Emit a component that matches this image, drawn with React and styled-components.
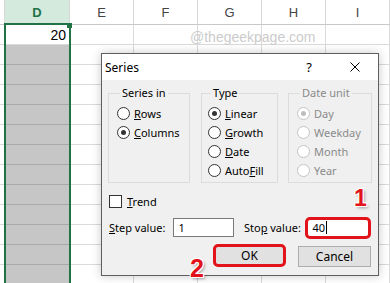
import styled, { createGlobalStyle } from "styled-components";

// Global :

const GlobalStyle = createGlobalStyle`
  html, body {
    margin: 0;
    padding: 0;
  }
  body {
    background: #fff;
    font-family: "Noto Sans", "Liberation Sans", sans-serif;
  }
`;

// Sheet :

const Page = styled.div`
  position: relative;
  width: 390px;
  height: 283px;
  overflow: hidden;
  background: #fff;
`;

const Sheet = styled.div`
  display: flex;
  flex-direction: column;
`;

const SheetRow = styled.div`
  display: flex;
`;

const HeaderCell = styled.div`
  box-sizing: border-box;
  flex: none;
  width: ${(p) => p.$w}px;
  height: 25px;
  display: flex;
  align-items: center;
  justify-content: center;
  border-right: 1px solid #d6d6d6;
  border-bottom: 1px solid #c9c9c9;
  background: ${(p) => (p.$selected ? "#d3eadd" : "#fff")};
  color: ${(p) => (p.$selected ? "#217346" : "#444")};
  font-family: "Liberation Sans", sans-serif;
  font-size: 13px;
  font-weight: ${(p) => (p.$selected ? 700 : 400)};
`;

const Cell = styled.div`
  box-sizing: border-box;
  flex: none;
  width: ${(p) => p.$w}px;
  height: 20px;
  display: flex;
  align-items: center;
  justify-content: flex-end;
  padding-right: 3px;
  border-right: 1px solid ${(p) => (p.$shaded ? "#c6c6c6" : "#dadada")};
  border-bottom: 1px solid ${(p) => (p.$shaded ? "#a9a9a9" : "#dadada")};
  background: ${(p) => (p.$shaded ? "#c6c6c6" : "#fff")};
  font-family: "Liberation Sans", sans-serif;
  font-size: 14px;
  color: #000;
`;

const Selection = styled.div`
  position: absolute;
  left: 4px;
  top: 23px;
  width: 67px;
  height: 300px;
  box-sizing: border-box;
  border: 2px solid #217346;
  pointer-events: none;
`;

const FillHandle = styled.div`
  position: absolute;
  left: 67px;
  top: 23px;
  width: 5px;
  height: 5px;
  background: #217346;
`;

const Watermark = styled.div`
  position: absolute;
  left: 190px;
  top: 29px;
  font-family: "Liberation Sans", sans-serif;
  font-size: 14px;
  color: #cbcbcb;
`;

// Dialog :

const Dialog = styled.div`
  position: absolute;
  left: 101px;
  top: 53px;
  width: 278px;
  height: 223px;
  box-sizing: border-box;
  display: flex;
  flex-direction: column;
  border: 1px solid #5f5f5f;
  background: #f0f0f0;
  box-shadow: 0 0 9px rgba(0, 0, 0, 0.22);
  font-size: 11px;
  color: #000;
`;

const TitleBar = styled.div`
  display: flex;
  align-items: center;
  height: 26px;
  padding-left: 3px;
  background: #fff;
  font-size: 12px;
`;

const Title = styled.span`
  flex: 1;
`;

const TitleButton = styled.span`
  display: flex;
  align-items: center;
  justify-content: center;
  width: 46px;
  height: 26px;
  font-size: 13px;
`;

const Body = styled.div`
  display: flex;
  flex-direction: column;
  flex: 1;
  padding: 6px 7px 0 6px;
`;

const Groups = styled.div`
  display: flex;
  gap: ${(p) => p.$gap || 10}px;
`;

const Group = styled.fieldset`
  box-sizing: border-box;
  flex: none;
  width: ${(p) => p.$w}px;
  height: 97px;
  margin: 0;
  margin-right: ${(p) => p.$mr || 0}px;
  padding: 4px 0 0 ${(p) => p.$pl || 8}px;
  min-width: 0;
  border: 1px solid #dcdcdc;
`;

const Legend = styled.legend`
  margin-left: 3px;
  padding: 0 2px;
  line-height: 14px;
  color: ${(p) => (p.$disabled ? "#8a8a8a" : "#000")};
`;

const Option = styled.div`
  display: flex;
  align-items: center;
  gap: 4px;
  height: 19px;
  color: ${(p) => (p.$disabled ? "#8a8a8a" : "#000")};
`;

const Radio = styled.span`
  box-sizing: border-box;
  flex: none;
  width: 13px;
  height: 13px;
  border-radius: 50%;
  border: 1px solid ${(p) => (p.$disabled ? "#c4c4c4" : "#333")};
  background: #fff;
  display: flex;
  align-items: center;
  justify-content: center;

  &::after {
    content: "";
    display: ${(p) => (p.$checked ? "block" : "none")};
    width: 5px;
    height: 5px;
    border-radius: 50%;
    background: ${(p) => (p.$disabled ? "#bdbdbd" : "#333")};
  }
`;

const Key = styled.span`
  text-decoration: underline;
  text-underline-offset: 1px;
`;

const CheckRow = styled.div`
  display: flex;
  align-items: center;
  gap: 5px;
  height: 13px;
  margin-top: 12px;
  padding-left: 1px;
`;

const Checkbox = styled.span`
  box-sizing: border-box;
  width: 13px;
  height: 13px;
  border: 1px solid #333;
  background: #fff;
`;

const FieldRow = styled.div`
  display: flex;
  align-items: center;
  height: 19px;
  margin-top: 10px;
  padding-left: 1px;
`;

const FieldLabel = styled.span`
  width: ${(p) => p.$w}px;
  margin-left: ${(p) => p.$ml || 0}px;
`;

const Input = styled.div`
  box-sizing: border-box;
  display: flex;
  align-items: center;
  width: ${(p) => p.$w}px;
  height: ${(p) => (p.$marked ? 22 : 19)}px;
  padding-left: ${(p) => (p.$marked ? 4 : 4)}px;
  background: #fff;
  border: ${(p) => (p.$marked ? "3px solid #e3131b" : "1px solid #7a7a7a")};
  border-radius: ${(p) => (p.$marked ? 5 : 0)}px;
  font-size: 11px;
`;

const Caret = styled.span`
  display: inline-block;
  width: 1px;
  height: 13px;
  margin-left: 1px;
  background: #000;
`;

const Buttons = styled.div`
  display: flex;
  align-items: flex-end;
  justify-content: flex-end;
  gap: 12px;
  height: 23px;
  margin-top: 7px;
`;

const Button = styled.div`
  box-sizing: border-box;
  display: flex;
  align-items: center;
  justify-content: center;
  width: ${(p) => (p.$marked ? 73 : 73)}px;
  height: ${(p) => (p.$marked ? 23 : 21)}px;
  background: #e1e1e1;
  border: ${(p) => (p.$marked ? "3px solid #e3131b" : "1px solid #adadad")};
  border-radius: ${(p) => (p.$marked ? 5 : 0)}px;
  font-size: 12px;
`;

const Step = styled.span`
  position: absolute;
  left: ${(p) => p.$x}px;
  top: ${(p) => p.$y}px;
  font-family: "Liberation Sans", sans-serif;
  font-weight: 700;
  font-size: ${(p) => p.$size}px;
  line-height: 1;
  color: #e3131b;
  text-shadow: 1px 1px 0 #fff, -1px -1px 0 #fff, 1px -1px 0 #fff,
    -1px 1px 0 #fff, 2px 2px 3px rgba(0, 0, 0, 0.35);
`;

// Data :

const columns = [
  { key: "C", w: 5 },
  { key: "D", w: 65 },
  { key: "E", w: 64 },
  { key: "F", w: 64 },
  { key: "G", w: 64 },
  { key: "H", w: 64 },
  { key: "I", w: 64 },
];

const rows = Array.from({ length: 13 }, (_, i) => i);

// Component :

function CloseIcon() {
  return (
    <svg width="10" height="10" viewBox="0 0 10 10">
      <path d="M0.5 0.5 L9.5 9.5 M9.5 0.5 L0.5 9.5" stroke="#000" strokeWidth="1" />
    </svg>
  );
}

function App() {
  return (
    <>
      <GlobalStyle />
      <Page>
        <Sheet>
          <SheetRow>
            {columns.map((c) => (
              <HeaderCell key={c.key} $w={c.w} $selected={c.key === "D"}>
                {c.key === "C" ? "" : c.key}
              </HeaderCell>
            ))}
          </SheetRow>
          {rows.map((r) => (
            <SheetRow key={r}>
              {columns.map((c) => (
                <Cell key={c.key} $w={c.w} $shaded={c.key === "D" && r > 0}>
                  {c.key === "D" && r === 0 ? "20" : ""}
                </Cell>
              ))}
            </SheetRow>
          ))}
        </Sheet>
        <Selection />
        <FillHandle />
        <Watermark>@thegeekpage.com</Watermark>

        <Dialog>
          <TitleBar>
            <Title>Series</Title>
            <TitleButton>?</TitleButton>
            <TitleButton>
              <CloseIcon />
            </TitleButton>
          </TitleBar>
          <Body>
            <Groups $gap={11}>
              <Group $w={82} $pl={8}>
                <Legend>Series in</Legend>
                <Option>
                  <Radio />
                  <span>
                    <Key>R</Key>ows
                  </span>
                </Option>
                <Option>
                  <Radio $checked />
                  <span>
                    <Key>C</Key>olumns
                  </span>
                </Option>
              </Group>
              <Group $w={77} $pl={6} $mr={-1}>
                <Legend>Type</Legend>
                <Option>
                  <Radio $checked />
                  <span>
                    <Key>L</Key>inear
                  </span>
                </Option>
                <Option>
                  <Radio />
                  <span>
                    <Key>G</Key>rowth
                  </span>
                </Option>
                <Option>
                  <Radio />
                  <span>
                    <Key>D</Key>ate
                  </span>
                </Option>
                <Option>
                  <Radio />
                  <span>
                    Auto<Key>F</Key>ill
                  </span>
                </Option>
              </Group>
              <Group $w={84} $pl={8}>
                <Legend $disabled>Date unit</Legend>
                <Option $disabled>
                  <Radio $checked $disabled />
                  <span>Day</span>
                </Option>
                <Option $disabled>
                  <Radio $disabled />
                  <span>Weekday</span>
                </Option>
                <Option $disabled>
                  <Radio $disabled />
                  <span>Month</span>
                </Option>
                <Option $disabled>
                  <Radio $disabled />
                  <span>Year</span>
                </Option>
              </Group>
            </Groups>

            <CheckRow>
              <Checkbox />
              <span>
                <Key>T</Key>rend
              </span>
            </CheckRow>

            <FieldRow>
              <FieldLabel $w={65}>
                <Key>S</Key>tep value:
              </FieldLabel>
              <Input $w={61}>1</Input>
              <FieldLabel $w={62} $ml={10}>
                Sto<Key>p</Key> value:
              </FieldLabel>
              <Input $w={66} $marked>
                40
                <Caret />
              </Input>
            </FieldRow>

            <Buttons>
              <Button $marked>OK</Button>
              <Button>Cancel</Button>
            </Buttons>
          </Body>
        </Dialog>

        <Step $x={354} $y={187} $size={23}>
          1
        </Step>
        <Step $x={190} $y={256} $size={25}>
          2
        </Step>
      </Page>
    </>
  );
}

export default App;
